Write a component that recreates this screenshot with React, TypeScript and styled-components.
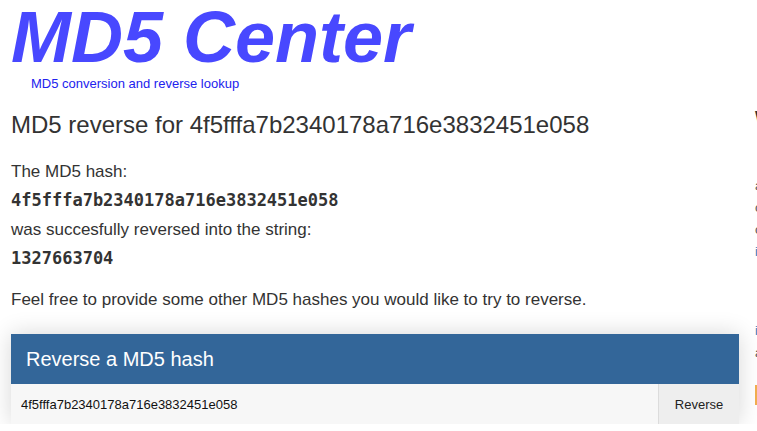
import React from "react";
import styled, { createGlobalStyle } from "styled-components";

const Global = createGlobalStyle`
  html, body { margin: 0; padding: 0; background: #fff; overflow: hidden; }
  body { font-family: "Liberation Sans", Arial, sans-serif; color: #333; }
`;

const Page = styled.div`
  display: flex;
  width: 1100px;
  align-items: flex-start;
`;

const Main = styled.div`
  width: 728px;
  padding-left: 11px;
  flex: none;
`;

const Side = styled.aside`
  margin-left: 16px;
  width: 300px;
  flex: none;
  padding-top: 108px;
`;

const Brand = styled.h1`
  margin: -2px 0 0;
  font-size: 72px;
  line-height: 78px;
  font-weight: bold;
  font-style: italic;
  color: #4848ff;
`;

const Tagline = styled.div`
  margin-left: 20px;
  font-size: 13px;
  line-height: 16px;
  color: #2222ee;
`;

const Heading = styled.h2`
  margin: 18px 0 0;
  font-size: 24px;
  font-weight: normal;
  line-height: 30px;
  color: #333;
`;

const Result = styled.div`
  margin-top: 17px;
  display: flex;
  flex-direction: column;
`;

const Line = styled.div<{ $mono?: boolean }>`
  font-family: ${(p) => (p.$mono ? '"DejaVu Sans Mono", monospace' : '"Liberation Sans", Arial, sans-serif')};
  font-weight: ${(p) => (p.$mono ? "bold" : "normal")};
  font-size: 17px;
  line-height: 29px;
  color: #333;
`;

const Para = styled.p`
  margin: 12px 0 0;
  font-size: 17px;
  line-height: 29px;
`;

const Panel = styled.div`
  margin-top: 20px;
  box-shadow: 0 0 22px rgba(0, 0, 0, 0.16);
`;

const PanelHead = styled.div`
  background: #336699;
  color: #fff;
  height: 50px;
  display: flex;
  align-items: center;
  padding-left: 15px;
  font-size: 20px;
`;

const Form = styled.form`
  display: flex;
  height: 40px;
  background: #f7f7f7;
`;

const Input = styled.input`
  flex: 1;
  border: none;
  background: transparent;
  font-family: "Liberation Sans", Arial, sans-serif;
  font-size: 13px;
  color: #111;
  padding: 0 10px;
  outline: none;
`;

const Button = styled.button`
  width: 81px;
  border: none;
  border-left: 1px solid #dcdcdc;
  background: #eeeeee;
  font-family: "Liberation Sans", Arial, sans-serif;
  font-size: 13px;
  color: #222;
  padding: 0;
`;

const SideTitle = styled.h3`
  margin: 0;
  font-size: 18px;
  line-height: 20px;
  font-weight: bold;
  color: #333;
`;

const SideText = styled.p<{ $gap?: number }>`
  margin: ${(p) => p.$gap ?? 0}px 0 0;
  font-size: 13px;
  line-height: 22px;
  color: #555;
`;

const SideLink = styled.a`
  color: #337ab7;
  text-decoration: none;
`;

const Note = styled.div`
  margin-top: 21px;
  border-left: 3px solid #f0ad4e;
  height: 20px;
  padding-left: 8px;
  font-size: 13px;
  color: #555;
`;

export default function App() {
  const hash = "4f5fffa7b2340178a716e3832451e058";
  return (
    <>
      <Global />
      <Page>
        <Main>
          <Brand>MD5 Center</Brand>
          <Tagline>MD5 conversion and reverse lookup</Tagline>
          <Heading>MD5 reverse for {hash}</Heading>
          <Result>
            <Line>The MD5 hash:</Line>
            <Line $mono>{hash}</Line>
            <Line>was succesfully reversed into the string:</Line>
            <Line $mono>1327663704</Line>
          </Result>
          <Para>Feel free to provide some other MD5 hashes you would like to try to reverse.</Para>
          <Panel>
            <PanelHead>Reverse a MD5 hash</PanelHead>
            <Form onSubmit={(e) => e.preventDefault()}>
              <Input defaultValue={hash} />
              <Button type="submit">Reverse</Button>
            </Form>
          </Panel>
        </Main>
        <Side>
          <SideTitle>What is MD5?</SideTitle>
          <SideText $gap={47}>
            a cryptographic hash function producing
            <br />
            commonly used to verify data integrity,
            <br />
            converting any input to 32 hex digits.
            <br />
            <SideLink href="#">in RFC 1321</SideLink>
          </SideText>
          <SideText $gap={57}>
            <SideLink href="#">is MD5 reversible?</SideLink>
            <br />
            a lookup table is used.
          </SideText>
          <Note>Note</Note>
        </Side>
      </Page>
    </>
  );
}
